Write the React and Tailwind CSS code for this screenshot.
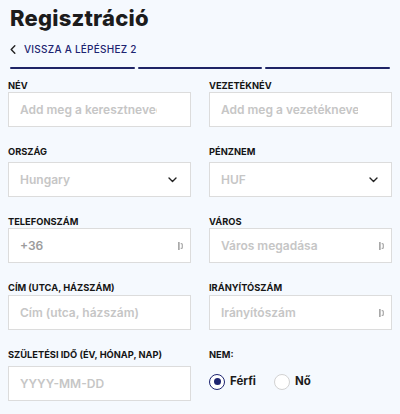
import React, { useState } from 'react'

// small autofill marker drawn at the right edge of some inputs
function FillIcon() {
  return (
    <svg width="5" height="8" viewBox="0 0 5 8" className="absolute right-[7px] top-1/2 -translate-y-1/2">
      <rect x="0" y="0" width="1.7" height="8" fill="#a9a9a9" />
      <path d="M2.7 1.6h0.7a0.9 0.9 0 0 1 0.9 0.9v3a0.9 0.9 0 0 1-0.9 0.9h-0.7" fill="none" stroke="#a9a9a9" strokeWidth="1.2" />
    </svg>
  )
}

function Chevron() {
  return (
    <svg width="9" height="6" viewBox="0 0 9 6" className="absolute right-[13px] top-1/2 -translate-y-1/2">
      <path d="M1 1l3.5 3.5L8 1" fill="none" stroke="#222" strokeWidth="1.4" strokeLinecap="round" strokeLinejoin="round" />
    </svg>
  )
}

function Label({ children }) {
  return (
    <p className="h-[10px] whitespace-nowrap text-[9.3px] font-bold uppercase leading-[10px] text-[#151515]">{children}</p>
  )
}

function Field({ placeholder, icon, select, value }) {
  return (
    <div className="relative h-[35px] border border-[#dcdcdc] bg-white">
      <div className="absolute inset-y-0 left-[11px] right-[33px] flex items-center overflow-hidden whitespace-nowrap">
        <span className={`text-[12px] font-semibold ${value ? 'text-[#9c9c9c]' : 'text-[#c6c6c6]'}`}>
          {value || placeholder}
        </span>
      </div>
      {icon && <FillIcon />}
      {select && <Chevron />}
    </div>
  )
}

function Radio({ checked, label, onClick }) {
  return (
    <button onClick={onClick} className="flex items-center gap-[5px]">
      <span className={`flex h-[16px] w-[16px] items-center justify-center rounded-full border-[1.5px] bg-white ${checked ? 'border-[#1d2470]' : 'border-[#d2d2d2]'}`}>
        {checked && <span className="h-[7px] w-[7px] rounded-full bg-[#1d2470]" />}
      </span>
      <span className="text-[11.5px] font-bold text-[#1c1c1c]">{label}</span>
    </button>
  )
}

export default function App() {
  const [gender, setGender] = useState('ferfi')

  const rows = [
    {
      top: 'mt-[12px]',
      gap: 'mt-[1px]',
      left: { label: 'Név', placeholder: 'Add meg a keresztneved' },
      right: { label: 'Vezetéknév', placeholder: 'Add meg a vezetéknevet' }
    },
    {
      top: 'mt-[20px]',
      gap: 'mt-[5px]',
      left: { label: 'Ország', placeholder: 'Hungary', select: true },
      right: { label: 'Pénznem', placeholder: 'HUF', select: true }
    },
    {
      top: 'mt-[20px]',
      gap: 'mt-[1px]',
      left: { label: 'Telefonszám', value: '+36', icon: true },
      right: { label: 'Város', placeholder: 'Város megadása', icon: true }
    },
    {
      top: 'mt-[20px]',
      gap: 'mt-[2px]',
      left: { label: 'Cím (utca, házszám)', placeholder: 'Cím (utca, házszám)' },
      right: { label: 'Irányítószám', placeholder: 'Irányítószám', icon: true }
    }
  ]

  return (
    <div className="min-h-[414px] bg-[#f5f9fe] px-2 pt-[3px]" style={{ fontFamily: 'Inter, "Open Sans", sans-serif' }}>
      <h1 className="pl-[2px] text-[22px] font-extrabold leading-[30px] tracking-[0.2px] text-[#1c1c1c]">Regisztráció</h1>

      <div className="mt-[10px] flex h-[12px] items-center gap-[8px] pl-[2px]">
        <svg width="6" height="9" viewBox="0 0 6 9">
          <path d="M4.8 0.8L1.2 4.5l3.6 3.7" fill="none" stroke="#222" strokeWidth="1.4" strokeLinecap="round" strokeLinejoin="round" />
        </svg>
        <span className="text-[10px] font-medium leading-[12px] tracking-[0.25px] text-[#1d2470]">VISSZA A LÉPÉSHEZ 2</span>
      </div>

      <div className="mt-[12px] grid grid-cols-3 gap-[3px] px-[2px]">
        <div className="h-[2px] rounded-full bg-[#1f2466]" />
        <div className="h-[2px] rounded-full bg-[#1f2466]" />
        <div className="h-[2px] rounded-full bg-[#1f2466]" />
      </div>

      {rows.map((row, i) => (
        <div key={i} className={`grid grid-cols-2 gap-[18px] ${row.top}`}>
          {[row.left, row.right].map((f) => (
            <div key={f.label}>
              <Label>{f.label}</Label>
              <div className={row.gap}>
                <Field placeholder={f.placeholder} value={f.value} icon={f.icon} select={f.select} />
              </div>
            </div>
          ))}
        </div>
      ))}

      <div className="mt-[20px] grid grid-cols-2 gap-[18px]">
        <div>
          <Label>Születési idő (év, hónap, nap)</Label>
          <div className="mt-[6px]">
            <Field placeholder="YYYY-MM-DD" />
          </div>
        </div>
        <div>
          <Label>Nem:</Label>
          <div className="mt-[13px] flex items-center gap-[18px]">
            <Radio checked={gender === 'ferfi'} label="Férfi" onClick={() => setGender('ferfi')} />
            <Radio checked={gender === 'no'} label="Nő" onClick={() => setGender('no')} />
          </div>
        </div>
      </div>
    </div>
  )
}
